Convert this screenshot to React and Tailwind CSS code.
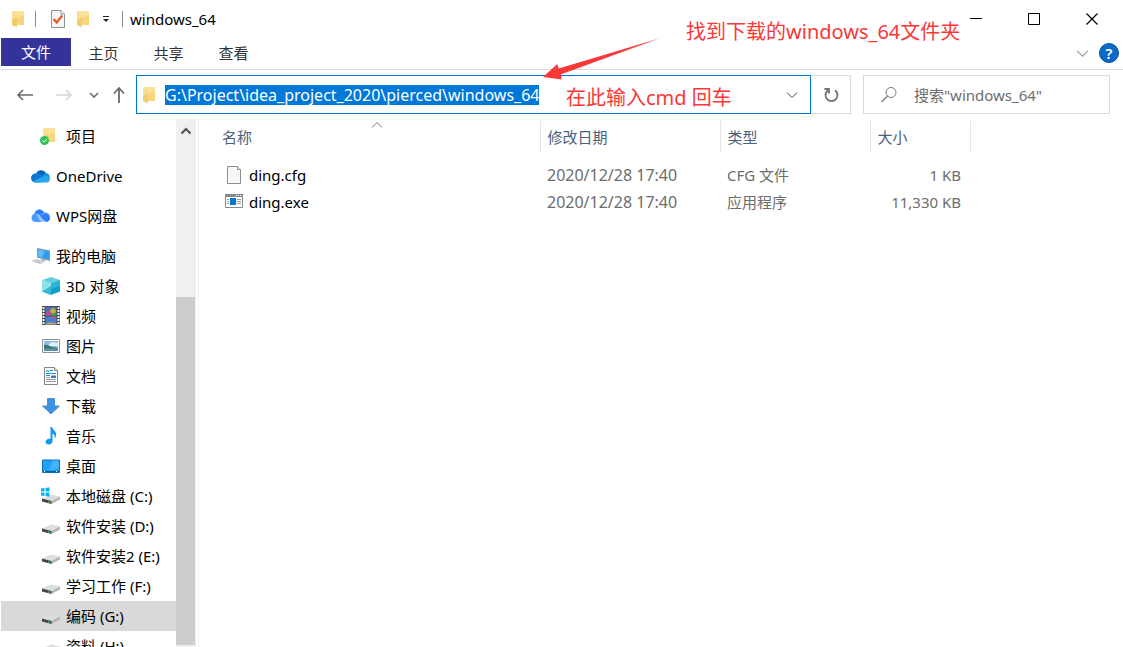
import { useState } from "react";

function FolderIcon({ synced = false }) {
  return (
    <svg width="18" height="18" viewBox="0 0 18 18" className="shrink-0">
      <path d="M4 1h11v14H4z" fill="#fbe29a" />
      <path d="M8 8l7-3v10H8z" fill="#f7d67c" />
      <path d="M3 1l5 3v13l-5-2z" fill="#f9df93" />
      <path d="M3 10l5-3v10l-5-2z" fill="#f2cd6c" />
      {synced && (
        <g>
          <circle cx="4.5" cy="13.5" r="4.5" fill="#34c05a" />
          <path d="M2.5 13.5l1.6 1.6 2.8-3" fill="none" stroke="#fff" />
        </g>
      )}
    </svg>
  );
}

function CheckedPageIcon() {
  return (
    <svg width="16" height="20" viewBox="0 0 16 20">
      <path d="M1.5 1.5h9.500l3.500 3.500v13.500h-13z" fill="#f4f5f7" stroke="#8d9299" />
      <path d="M11 1.500v3.500h3.500" fill="#fff" stroke="#8d9299" />
      <path d="M3.500 10l3.200 3.500 5.500-7" fill="none" stroke="#ea5a1c" strokeWidth="2.200" />
    </svg>
  );
}

function OneDriveIcon() {
  return (
    <svg width="20" height="18" viewBox="0 0 20 18">
      <path d="M5 7a5.500 5.500 0 0 1 10-1l-2 6H5z" fill="#0364b8" />
      <path d="M15 6a4.300 4.300 0 0 1 1.500 8L10 11l2-4z" fill="#1490df" />
      <path d="M4.500 6.500c2-.8 4-.2 5.500 1l5 3.500-5 4.500H4.500a4.500 4.500 0 0 1 0-9z" fill="#0f78d4" />
      <path d="M2 14.500l9-4.500c2-1 4-1.200 6-.5a3.200 3.200 0 0 1-.5 6H4.500c-1 0-2-.4-2.500-1z" fill="#28a8ea" />
    </svg>
  );
}

function WpsCloudIcon() {
  return (
    <svg width="20" height="18" viewBox="0 0 20 18">
      <path d="M3.500 6.500a5 5 0 0 1 9.500-1 5 5 0 0 1 6 5 4 4 0 0 1-4 4.500L6 8z" fill="#2b7dfb" />
      <path d="M10 8l2.500-1.500c3-1.200 6 .5 6.500 3.500" fill="none" stroke="#8fc3ff" strokeWidth=".8" />
      <path d="M4.500 6.500C1.800 6.500.5 9 .5 11c0 2.500 1.800 4 4 4h6.500L8.500 9c-1-1.500-2.200-2.500-4-2.500z" fill="#4a9dff" />
      <path d="M5 6.500c3 0 4.300 2.500 5.800 4.700 1.200 1.800 2.500 3.800 5 3.800H10L8 12C6.800 10 7 8 5 6.500z" fill="#9acbff" />
    </svg>
  );
}

function ComputerIcon() {
  return (
    <svg width="20" height="18" viewBox="0 0 20 18">
      <path d="M6 1l13 2.500V14L6 10.500z" fill="#7b98ad" />
      <path d="M7 2.300l11 2.200v8L7 9.500z" fill="#2d9df0" />
      <path d="M7 2.300l7 1.400-3 6.800L7 9.500z" fill="#61baf8" />
      <path d="M9 12.500l4-.5 2 2-3 .5z" fill="#a9b2b9" />
      <path d="M0 13.500l6-1.500 8 3-5 2.500z" fill="#d8dde1" />
      <path d="M2 13.500l7 2.500M5 12.800l6 2.300" stroke="#a5adb3" strokeWidth=".7" />
    </svg>
  );
}

function CubeIcon() {
  return (
    <svg width="20" height="18" viewBox="0 0 20 18">
      <path d="M10 0l9 3-9 3.500L1 3z" fill="#62cfdb" />
      <path d="M1 3l9 3.500V18l-9-3.500z" fill="#8ce3ea" />
      <path d="M19 3l-9 3.500V18l9-3.500z" fill="#0f9fca" />
      <path d="M1 14.500L10 9v9z" fill="#37b9cf" />
      <path d="M10 6.500L19 3v6l-9 3z" fill="#2bb5d6" />
    </svg>
  );
}

function VideoIcon() {
  return (
    <svg width="20" height="20" viewBox="0 0 20 20">
      <path d="M1 0h18v19H1z" fill="#4b4b4b" />
      <path d="M2.500 1v18M17.500 1v18" stroke="#f0f0f0" strokeWidth="2" strokeDasharray="2 1" />
      <path d="M4.500 1h11v8.500h-11z" fill="#426fc5" />
      <path d="M4.500 10.500h11v8h-11z" fill="#4a7bd6" />
      <circle cx="12" cy="5" r="2.800" fill="#c9b02f" />
      <path d="M5 7l3-3 2 4v1.500H5z" fill="#c7498d" />
      <path d="M10 7.500h5.500v2H10z" fill="#44a044" />
      <path d="M10.500 10.500h4l-2 3z" fill="#dc5838" />
      <path d="M4.500 17.500c3-1.500 8-1.500 11 0v1h-11z" fill="#c6a55c" />
    </svg>
  );
}

function PictureIcon() {
  return (
    <svg width="20" height="18" viewBox="0 0 20 18">
      <path d="M1.500 2.500h17v13h-17z" fill="#fff" stroke="#929292" />
      <path d="M3 4h14v10H3z" fill="#8cc0f0" />
      <path d="M9 6c2-1 5-1 8 0v3H7z" fill="#e2f2fc" />
      <path d="M3 8c3-1 5 1 8 2l6 1v1H3z" fill="#3d725c" />
      <path d="M3 11.500h14V14H3z" fill="#5c8fb8" />
    </svg>
  );
}

function DocumentIcon() {
  return (
    <svg width="20" height="18" viewBox="0 0 20 18">
      <path d="M3.500.5h10l3 3v14h-13z" fill="#fff" stroke="#858585" />
      <path d="M13.500.5v3h3" fill="#eee" stroke="#858585" />
      <path d="M5 6.500h10M5 8.500h4M9 3.500h3M5 5l1.500-2L8 5" fill="none" stroke="#2690d0" />
      <path d="M5 10.500h4M5 12.500h10M5 14.500h10" stroke="#8e9aa3" />
      <path d="M10 8.500h5V11h-5z" fill="#3a78b7" />
    </svg>
  );
}

function DownloadIcon() {
  return (
    <svg width="20" height="18" viewBox="0 0 20 18">
      <path d="M6.500 1.500h7V9h5L10 17 1.500 9h5z" fill="#3e94e4" stroke="#2b78c2" strokeWidth=".7" />
    </svg>
  );
}

function MusicIcon() {
  return (
    <svg width="20" height="18" viewBox="0 0 20 18">
      <path d="M9.500 0h1.700c.3 3 4 4 4 7.500 0 2-1 3.500-1.700 4.200.6-2.500.3-4-2-5.200V14c0 2-1.700 3.500-4 3.500C5.800 17.500 4.500 16.600 4.500 15c0-2 2.500-3.800 5-3z" fill="#0b9bf0" />
    </svg>
  );
}

function DesktopIcon() {
  return (
    <svg width="20" height="18" viewBox="0 0 20 18">
      <path d="M1.500 3h17v12.500h-17z" fill="#1ea2f8" stroke="#0870bd" />
      <path d="M12 3.500h6v8l-10 2z" fill="#43b3fb" />
      <path d="M2 14.500h16" stroke="#075f9f" />
      <path d="M3 14.500h2M15 14.500h2" stroke="#fff" strokeDasharray="1 1" />
    </svg>
  );
}

function DriveIcon({ system = false }) {
  return (
    <svg width="20" height="18" viewBox="0 0 20 18">
      <path d="M1 11.500l9.500-4 8.500 2-8.500 4.500z" fill="#dcdddf" />
      <path d="M10.500 14L19 9.500v3l-8.500 4.500z" fill="#b4b6b8" />
      <path d="M1 11.500l9.500 2.500v3L1 14.500z" fill="#444746" />
      <path d="M7 14.200l2 .5v1.300l-2-.5z" fill="#2fd03f" />
      {system && (
        <path
          d="M0 1.500l3.500-.5v3.500H0zM4.500.9L8.500.3v4.200h-4zM0 5.500h3.500V9L0 8.500zM4.500 5.500h4v4.200l-4-.6z"
          fill="#08b4f2"
        />
      )}
    </svg>
  );
}

function CfgIcon() {
  return (
    <svg width="20" height="20" viewBox="0 0 20 20">
      <path d="M3.500 1.500h10l3 3v14h-13z" fill="#f8f8f8" stroke="#8e8e8e" />
      <path d="M13.500 1.500v3h3" fill="#fff" stroke="#8e8e8e" />
    </svg>
  );
}

function ExeIcon() {
  return (
    <svg width="20" height="20" viewBox="0 0 20 20">
      <path d="M1.500 2.500h17v13h-17z" fill="#fff" stroke="#858a8f" />
      <path d="M1 2h18v3H1z" fill="#858a8f" />
      <path d="M12 3.500h1M14 3.500h1M16 3.500h1" stroke="#fff" />
      <path d="M6 6h6v7H6z" fill="#0078d7" />
      <path d="M3 7.500h2M3 9.500h2M3 11.500h2M13 7.500h4M13 9.500h4M13 11.500h4" stroke="#8d9aa5" />
    </svg>
  );
}

function Chevron({ up = false, size = 12, className = "" }) {
  return (
    <svg width={size} height={size} viewBox="0 0 12 12" className={className}>
      <path d={up ? "M1 8.500l5-5 5 5" : "M1 3.500l5 5 5-5"} fill="none" stroke="currentColor" />
    </svg>
  );
}

const topPlaces = [
  { name: "OneDrive", icon: <OneDriveIcon /> },
  { name: "WPS网盘", icon: <WpsCloudIcon /> },
];

const computerPlaces = [
  { name: "3D 对象", icon: <CubeIcon /> },
  { name: "视频", icon: <VideoIcon /> },
  { name: "图片", icon: <PictureIcon /> },
  { name: "文档", icon: <DocumentIcon /> },
  { name: "下载", icon: <DownloadIcon /> },
  { name: "音乐", icon: <MusicIcon /> },
  { name: "桌面", icon: <DesktopIcon /> },
  { name: "本地磁盘 (C:)", icon: <DriveIcon system /> },
  { name: "软件安装 (D:)", icon: <DriveIcon /> },
  { name: "软件安装2 (E:)", icon: <DriveIcon /> },
  { name: "学习工作 (F:)", icon: <DriveIcon /> },
  { name: "编码 (G:)", icon: <DriveIcon /> },
  { name: "资料 (H:)", icon: <DriveIcon /> },
];

const files = [
  { name: "ding.cfg", date: "2020/12/28 17:40", type: "CFG 文件", size: "1 KB", icon: <CfgIcon /> },
  { name: "ding.exe", date: "2020/12/28 17:40", type: "应用程序", size: "11,330 KB", icon: <ExeIcon /> },
];

function TitleBar() {
  return (
    <header className="flex h-[38px] items-center pl-[9px]">
      <FolderIcon />
      <span className="ml-2 h-4 w-px bg-[#8c8c8c]" />
      <button aria-label="属性" className="ml-[14px]">
        <CheckedPageIcon />
      </button>
      <button aria-label="新建文件夹" className="ml-2">
        <FolderIcon />
      </button>
      <button aria-label="自定义快速访问工具栏" className="ml-1.5 p-1">
        <svg width="8" height="8" viewBox="0 0 8 8">
          <path d="M1 1.500h6" stroke="#222" />
          <path d="M1 4h6L4 7z" fill="#222" />
        </svg>
      </button>
      <span className="ml-2 h-4 w-px bg-[#8c8c8c]" />
      <h1 className="ml-[7px] flex-1 text-black">windows_64</h1>
      <div className="flex h-full pr-0.5">
        <button aria-label="最小化" className="flex w-[58px] items-center justify-center">
          <svg width="12" height="12" viewBox="0 0 12 12">
            <path d="M0 5.500h12" stroke="#000" />
          </svg>
        </button>
        <button aria-label="最大化" className="flex w-[58px] items-center justify-center">
          <svg width="12" height="12" viewBox="0 0 12 12">
            <path d="M.5.5h11v11H.5z" fill="none" stroke="#000" />
          </svg>
        </button>
        <button aria-label="关闭" className="flex w-[58px] items-center justify-center">
          <svg width="12" height="12" viewBox="0 0 12 12">
            <path d="M.5.5l11 11M11.500.5l-11 11" stroke="#000" strokeWidth="1.200" />
          </svg>
        </button>
      </div>
    </header>
  );
}

function Ribbon() {
  return (
    <div className="flex h-8 items-start border-b border-[#dadbdc] pl-px">
      <button className="h-7 w-[70px] bg-[#353399] text-white">文件</button>
      <button className="h-[30px] w-[65px] text-[#333]">主页</button>
      <button className="h-[30px] w-[65px] text-[#333]">共享</button>
      <button className="h-[30px] w-[65px] text-[#333]">查看</button>
      <div className="ml-auto flex h-[30px] items-center gap-2.5 pr-1">
        <button aria-label="展开功能区">
          <Chevron size={13} className="text-[#9a9a9a]" />
        </button>
        <button
          aria-label="帮助"
          className="flex size-5 items-center justify-center rounded-full border border-[#0a5097] bg-[#0b68cb] text-[15px] font-semibold text-white"
        >
          ?
        </button>
      </div>
    </div>
  );
}

function AddressRow() {
  const [path, setPath] = useState("G:\\Project\\idea_project_2020\\pierced\\windows_64");
  const [search, setSearch] = useState("");

  return (
    <div className="flex h-[49px] items-center pr-[13px] pl-4">
      <button aria-label="后退" className="text-[#6b6b6b]">
        <svg width="18" height="18" viewBox="0 0 18 18">
          <path d="M17 9H2M7 4L2 9l5 5" fill="none" stroke="currentColor" strokeWidth="1.600" />
        </svg>
      </button>
      <button aria-label="前进" className="ml-[21px] text-[#d5d5d5]">
        <svg width="18" height="18" viewBox="0 0 18 18">
          <path d="M1 9h15M11 4l5 5-5 5" fill="none" stroke="currentColor" strokeWidth="1.600" />
        </svg>
      </button>
      <button aria-label="最近浏览的位置" className="ml-4 text-[#707070]">
        <svg width="10" height="10" viewBox="0 0 10 10">
          <path d="M1 3l4 4 4-4" fill="none" stroke="currentColor" strokeWidth="1.600" />
        </svg>
      </button>
      <button aria-label="上移一级" className="ml-[11px] text-[#6b6b6b]">
        <svg width="18" height="18" viewBox="0 0 18 18">
          <path d="M9 17V2M4 7.500L9 2l5 5.500" fill="none" stroke="currentColor" strokeWidth="1.800" />
        </svg>
      </button>

      <div className="ml-2 flex h-[39px] flex-1 items-center border border-[#0078d7] pr-3 pl-[3px]">
        <FolderIcon />
        <input
          aria-label="地址"
          value={path}
          onChange={(e) => setPath(e.target.value)}
          className="ml-[7px] field-sizing-content h-5 bg-[#0078d7] text-base leading-5 text-white outline-none"
        />
        <button aria-label="历史记录" className="ml-auto text-[#444]">
          <Chevron />
        </button>
      </div>
      <button
        aria-label="刷新"
        className="flex h-[39px] w-10 items-center justify-center border border-l-0 border-[#d9d9d9] text-[#707070]"
      >
        <svg width="16" height="16" viewBox="0 0 16 16">
          <path d="M12 3.200A6 6 0 1 1 5 3.200" fill="none" stroke="currentColor" strokeWidth="1.800" />
          <path d="M1.500 2h4.500v4.500" fill="none" stroke="currentColor" strokeWidth="1.800" />
        </svg>
      </button>
      <label className="ml-3 flex h-[39px] w-[247px] items-center border border-[#d9d9d9] pl-4">
        <svg width="18" height="18" viewBox="0 0 18 18" className="shrink-0">
          <circle cx="11" cy="6.500" r="5" fill="none" stroke="#777" />
          <path d="M7.500 10L1.500 16" stroke="#777" strokeWidth="1.200" />
        </svg>
        <input
          type="text"
          aria-label="搜索"
          placeholder={'搜索"windows_64"'}
          value={search}
          onChange={(e) => setSearch(e.target.value)}
          className="ml-4 w-full min-w-0 outline-none placeholder:text-[#6d6d6d]"
        />
      </label>
    </div>
  );
}

function Sidebar() {
  const [selected, setSelected] = useState("编码 (G:)");

  return (
    <aside className="flex min-h-0 shrink-0 overflow-hidden border-r border-[#f2f2f2] pr-0.5 pl-px">
      <nav className="w-[175px] overflow-hidden pt-0.5 text-black">
        <a href="#项目" className="mb-2.5 flex h-[30px] items-center gap-2 pl-[39px]">
          <FolderIcon synced />
          项目
        </a>
        {topPlaces.map((place) => (
          <a
            key={place.name}
            href={`#${place.name}`}
            className="mb-2.5 flex h-[30px] items-center gap-[5px] pl-[30px]"
          >
            {place.icon}
            {place.name}
          </a>
        ))}
        <a href="#我的电脑" className="flex h-[30px] items-center gap-[5px] pl-[30px]">
          <ComputerIcon />
          我的电脑
        </a>
        {computerPlaces.map((place) => (
          <a
            key={place.name}
            href={`#${place.name}`}
            onClick={() => setSelected(place.name)}
            className={`flex h-[30px] items-center gap-[5px] pl-10 ${
              selected === place.name ? "bg-[#d9d9d9]" : ""
            }`}
          >
            {place.icon}
            {place.name}
          </a>
        ))}
      </nav>
      <div className="flex w-5 flex-col bg-[#f0f0f0] pb-0.5">
        <button aria-label="向上滚动" className="flex h-6 items-center justify-center text-[#505050]">
          <svg width="12" height="12" viewBox="0 0 12 12">
            <path d="M1.500 8.500L6 4l4.500 4.500" fill="none" stroke="currentColor" strokeWidth="2" />
          </svg>
        </button>
        <div className="flex-4" />
        <div className="mr-px flex-9 bg-[#cdcdcd]" />
      </div>
    </aside>
  );
}

function FileTable() {
  return (
    <main className="relative min-w-0 flex-1 pt-0.5">
      <Chevron up className="absolute top-0 left-[172px] text-[#777]" />
      <table className="w-[771px] table-fixed text-[#6d6d6d]">
        <thead className="text-left text-[#4c607a]">
          <tr className="h-8">
            <th className="w-[341px] border-r border-[#e5e5e5] pl-[23px] font-normal">名称</th>
            <th className="w-[180px] border-r border-[#e5e5e5] pl-[7px] font-normal">修改日期</th>
            <th className="w-[150px] border-r border-[#e5e5e5] pl-[7px] font-normal">类型</th>
            <th className="w-[100px] border-r border-[#e5e5e5] pl-[7px] font-normal">大小</th>
          </tr>
        </thead>
        <tbody className="before:block before:h-2">
          {files.map((file) => (
            <tr key={file.name} className="h-[27px]">
              <td className="pl-[25px] text-black">
                <div className="flex items-center gap-[5px]">
                  {file.icon}
                  {file.name}
                </div>
              </td>
              <td className="pl-[7px] text-base leading-5">{file.date}</td>
              <td className="pl-[7px]">{file.type}</td>
              <td className="pr-[9px] text-right">{file.size}</td>
            </tr>
          ))}
        </tbody>
      </table>
    </main>
  );
}

// Red notes drawn on top of the window
function Annotations() {
  return (
    <div className="pointer-events-none absolute inset-0 text-xl leading-7 text-[#fb3838]">
      <svg width="118" height="42" viewBox="0 0 118 42" className="absolute top-[38px] left-[542px]">
        <path d="M117 .5L16.700 30.500 15.300 26 1 39l18.700 2.500-1-5z" fill="#fb3838" />
      </svg>
      <p className="absolute top-[18px] left-[686px] whitespace-nowrap">找到下载的windows_64文件夹</p>
      <p className="absolute top-[84px] left-[566px] whitespace-nowrap">在此输入cmd 回车</p>
    </div>
  );
}

export default function App() {
  return (
    <div className="relative flex h-screen flex-col overflow-hidden bg-white font-['Noto_Sans','Noto_Sans_CJK_SC',sans-serif] text-[15px] leading-5">
      <TitleBar />
      <Ribbon />
      <AddressRow />
      <div className="flex min-h-0 flex-1">
        <Sidebar />
        <FileTable />
      </div>
      <Annotations />
    </div>
  );
}
